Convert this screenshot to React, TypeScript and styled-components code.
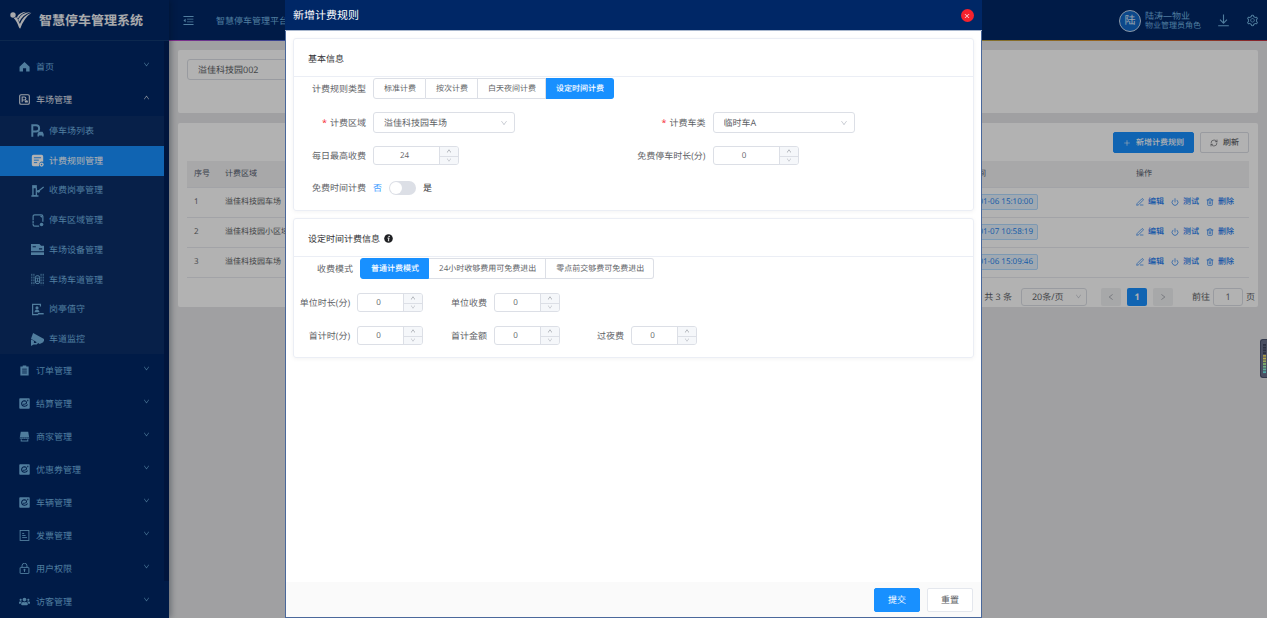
import React, { useState } from "react";
import styled, { createGlobalStyle, css } from "styled-components";
import {
  AiOutlineMenuFold,
  AiOutlineSetting,
  AiOutlineDown,
  AiOutlineUp,
  AiOutlineLeft,
  AiOutlineRight,
  AiOutlineClose,
  AiOutlinePlus,
} from "react-icons/ai";
import { FaUsers } from "react-icons/fa";
import { PenLine, Power, Trash2, RefreshCw } from "lucide-react";

const GlobalStyle = createGlobalStyle`
  * { box-sizing: border-box; }
  body {
    margin: 0;
    background: #e5e6e8;
    color: #606266;
    font-family: "Open Sans", "Noto Sans CJK SC", sans-serif;
    font-size: 9px;
    line-height: 14px;
    text-rendering: geometricPrecision;
    overflow: hidden;
  }
  button, input, select { font: inherit; color: inherit; margin: 0; text-rendering: inherit; }
  button { cursor: pointer; }
  a { color: inherit; text-decoration: none; }
  ul { list-style: none; margin: 0; padding: 0; }
  svg { display: block; flex: none; }
`;

/* ---------- page shell ---------- */

const Shell = styled.div`
  display: flex;
  height: 100vh;
`;

const Sidebar = styled.aside`
  display: flex;
  flex-direction: column;
  flex: none;
  width: 169px;
  background: #002766;
  color: #73b4e2;
  z-index: 1;
  box-shadow: 2px 0 6px rgba(0, 21, 41, 0.35);
`;

const Brand = styled.div`
  display: flex;
  align-items: center;
  gap: 7px;
  height: 41px;
  padding-left: 10px;
  border-bottom: 1px solid #123a70;
  color: #f2f4f7;
  font-size: 13px;
  font-weight: 700;
  line-height: 20px;
  white-space: nowrap;
`;

const MenuScroll = styled.nav`
  flex: 1;
  min-height: 0;
  padding: 9px 5px 0 0;
  background: linear-gradient(#001f58, #001f58) right top / 5px 540px no-repeat;
`;

const MenuLink = styled.a<{ $open?: boolean }>`
  display: flex;
  align-items: center;
  height: 33px;
  padding: 0 14px 0 19px;
  gap: 6px;
  color: ${(p) => (p.$open ? "#e4eaf2" : "inherit")};
`;

const MenuText = styled.span`
  flex: 1;
`;

const MenuArrow = styled.span`
  padding-bottom: 4px;
`;

const SubMenu = styled.ul`
  display: grid;
  grid-template-rows: repeat(8, 1fr);
  height: 238px;
  background: #0b2f69;
`;

const SubLink = styled.a<{ $active?: boolean }>`
  display: flex;
  align-items: center;
  height: 100%;
  padding-left: 31px;
  gap: 5px;
  ${(p) =>
    p.$active &&
    css`
      background: #1890ff;
      color: #ffffff;
    `}
`;

const Main = styled.div`
  flex: 1;
  min-width: 0;
`;

const TopBar = styled.header`
  display: flex;
  align-items: center;
  height: 41px;
  padding: 0 8px 0 13px;
  background:
    linear-gradient(90deg, #c040c8, #3a6ad0 12%, #20b0c0 40%, #b8a040 74%, #d89030 85%, #c03040) left bottom / 100% 1px no-repeat,
    #002766;
  color: #73b4e2;
`;

const Crumb = styled.span`
  flex: 1;
  margin-left: 21px;
`;

const IconButton = styled.button`
  display: flex;
  align-items: center;
  padding: 0;
  border: 0;
  background: none;
`;

const Avatar = styled.span`
  display: grid;
  place-items: center;
  width: 22px;
  height: 22px;
  margin-right: 4px;
  border: 1px solid #c5d8ee;
  border-radius: 50%;
  background: #1268c8;
  color: #dce9f8;
  font-size: 11px;
`;

const User = styled.div`
  display: flex;
  flex-direction: column;
  margin-right: 16px;
  line-height: 11px;
`;

const Role = styled.span`
  font-size: 8px;
  line-height: 10px;
`;

const TopTools = styled.div`
  display: flex;
  gap: 16px;
`;

const Content = styled.main`
  display: flex;
  flex-direction: column;
  gap: 10px;
  padding: 9px;
`;

const Panel = styled.section`
  background: #ffffff;
  border-radius: 2px;
`;

const SearchPanel = styled(Panel)`
  height: 63px;
  padding: 9px;
`;

const SearchInput = styled.input`
  display: block;
  width: 142px;
  height: 21px;
  padding: 0 10px;
  border: 1px solid #dcdfe6;
  border-radius: 3px;
  background: #ffffff;
`;

const Toolbar = styled.div`
  display: flex;
  justify-content: flex-end;
  gap: 6px;
  padding: 9px 9px 8px;
`;

const ToolButton = styled.button<{ $primary?: boolean }>`
  display: flex;
  align-items: center;
  justify-content: center;
  gap: 5px;
  height: 21px;
  padding: 0 9px;
  border: 1px solid ${(p) => (p.$primary ? "#1890ff" : "#dcdfe6")};
  border-radius: 2px;
  background: ${(p) => (p.$primary ? "#1890ff" : "#ffffff")};
  color: ${(p) => (p.$primary ? "#ffffff" : "#606266")};
  font-size: 8px;
  font-weight: 500;
`;

const TableWrap = styled.div`
  padding: 0 9px;
`;

const Table = styled.table`
  width: 100%;
  table-layout: fixed;
  border-collapse: collapse;
  font-size: 8px;

  th, td {
    height: 30px;
    padding: 0 7px;
    border-bottom: 1px solid #e8eaef;
    text-align: left;
    white-space: nowrap;
  }
  th {
    height: 26px;
    background: #f1f1f2;
    color: #515a6e;
    font-weight: 400;
  }
`;

const Tag = styled.span`
  display: inline-block;
  height: 16px;
  width: 84px;
  padding: 0 4px;
  border: 1px solid #b3dcff;
  border-radius: 2px;
  background: #e6f3ff;
  color: #1880f0;
  line-height: 14px;
  text-align: right;
`;

const Actions = styled.div`
  display: flex;
  gap: 7px;
`;

const ActionLink = styled.button`
  display: flex;
  align-items: center;
  gap: 4px;
  padding: 0;
  border: 0;
  background: none;
  color: #1878f0;
  font-weight: 500;
`;

const Pagination = styled.div`
  display: flex;
  align-items: center;
  justify-content: flex-end;
  height: 29px;
  padding: 9px 3px 0 0;
`;

const PageButton = styled.button<{ $current?: boolean }>`
  display: grid;
  place-items: center;
  width: 20px;
  height: 18px;
  margin-right: 6px;
  padding: 0;
  border: 0;
  border-radius: 2px;
  background: ${(p) => (p.$current ? "#1890ff" : "#f0f1f3")};
  color: ${(p) => (p.$current ? "#ffffff" : "#a0a4ac")};
  font-weight: ${(p) => (p.$current ? 700 : 400)};
`;

const PageInput = styled.input`
  width: 30px;
  height: 18px;
  margin: 0 3px;
  padding: 0;
  border: 1px solid #dcdfe6;
  border-radius: 3px;
  text-align: center;
`;

const JumpLabel = styled.label`
  display: flex;
  align-items: center;
  margin-left: 13px;
`;

/* ---------- form controls ---------- */

const SelectBox = styled.div<{ $width: number }>`
  position: relative;
  width: ${(p) => p.$width}px;

  svg {
    position: absolute;
    right: 7px;
    top: 50%;
    margin-top: -4px;
    color: #c0c4cc;
    pointer-events: none;
  }
`;

const SelectField = styled.select<{ $small?: boolean }>`
  display: block;
  appearance: none;
  width: 100%;
  height: ${(p) => (p.$small ? 18 : 21)}px;
  padding: 0 10px;
  border: 1px solid #dcdfe6;
  border-radius: 3px;
  background: #ffffff;
`;

const Stepper = styled.div<{ $wide?: boolean }>`
  display: flex;
  width: ${(p) => (p.$wide ? 86 : 66)}px;
  height: 19px;
  border: 1px solid #dcdfe6;
  border-radius: 3px;
  background: #ffffff;
  overflow: hidden;
`;

const StepperInput = styled.input`
  flex: 1;
  min-width: 0;
  padding: 0 4px 0 0;
  border: 0;
  background: none;
  text-align: center;
  font-size: 8px;
  appearance: textfield;

  &::-webkit-inner-spin-button { appearance: none; margin: 0; }
`;

const StepperButtons = styled.div`
  display: grid;
  grid-template-rows: 1fr 1fr;
  width: 19px;
  border-left: 1px solid #dcdfe6;
  background: #f5f7fa;
`;

const StepperButton = styled.button`
  display: grid;
  place-items: center;
  min-height: 0;
  padding: 0;
  border: 0;
  background: none;
  color: #8f939b;

  & + & { border-top: 1px solid #dcdfe6; color: #b4b8c0; }
`;

const RadioGroup = styled.div`
  display: flex;
`;

const RadioButton = styled.label<{ $checked: boolean }>`
  display: flex;
  align-items: center;
  height: 21px;
  padding: 0 9px 0 10px;
  border: 1px solid ${(p) => (p.$checked ? "#1890ff" : "#dcdfe6")};
  border-left-width: 0;
  background: ${(p) => (p.$checked ? "#1890ff" : "#ffffff")};
  color: ${(p) => (p.$checked ? "#ffffff" : "#606266")};
  font-size: 8px;
  font-weight: ${(p) => (p.$checked ? 500 : 400)};
  white-space: nowrap;
  cursor: pointer;

  &:first-child { border-left-width: 1px; border-radius: 3px 0 0 3px; }
  &:last-child { border-radius: 0 3px 3px 0; }

  input { position: absolute; opacity: 0; width: 0; height: 0; }
`;

const SwitchRow = styled.div`
  display: flex;
  align-items: center;
  gap: 7px;
  height: 20px;
`;

const SwitchText = styled.span<{ $on?: boolean }>`
  color: ${(p) => (p.$on ? "#409eff" : "#303133")};
`;

const SwitchInput = styled.input`
  appearance: none;
  width: 27px;
  height: 14px;
  padding: 1px;
  border-radius: 7px;
  background: #dcdfe6;
  cursor: pointer;

  &::before {
    content: "";
    display: block;
    width: 12px;
    height: 12px;
    border-radius: 50%;
    background: #ffffff;
  }
  &:checked { background: #1890ff; }
  &:checked::before { margin-left: 13px; }
`;

/* ---------- dialog ---------- */

const Mask = styled.div`
  position: fixed;
  inset: 0;
  z-index: 10;
  display: flex;
  justify-content: center;
  background: rgba(0, 0, 0, 0.3);
`;

const Dialog = styled.div`
  display: flex;
  flex-direction: column;
  width: 55%;
  height: 100%;
  border: 1px solid #4a689b;
  border-top: 0;
  background: #ffffff;
`;

const DialogHead = styled.header`
  display: flex;
  align-items: center;
  justify-content: space-between;
  height: 31px;
  padding: 1px 8px 0;
  margin: 0 -1px;
  background: #002766;
  border-bottom: 1px solid #a9b7cd;
`;

const DialogTitle = styled.h2`
  margin: 0;
  color: #ffffff;
  font-size: 11px;
  font-weight: 400;
`;

const CloseButton = styled.button`
  display: grid;
  place-items: center;
  width: 13px;
  height: 13px;
  padding: 0;
  border: 0;
  border-radius: 50%;
  background: #f5222d;
  color: #ffffff;

  svg { stroke: currentColor; stroke-width: 40; }
`;

const DialogBody = styled.div`
  flex: 1;
  display: flex;
  flex-direction: column;
  gap: 7px;
  padding: 7px;
`;

const Card = styled.section`
  border: 1px solid #ebeef5;
  border-radius: 3px;
  box-shadow: 0 1px 4px rgba(0, 0, 0, 0.05);
`;

const CardTitle = styled.h3`
  display: flex;
  align-items: center;
  gap: 4px;
  height: 38px;
  margin: 0;
  padding: 2px 14px 0;
  border-bottom: 1px solid #ebeef5;
  color: #303133;
  font-size: 9px;
  font-weight: 400;
`;

const CardBody = styled.div<{ $loose?: boolean }>`
  display: flex;
  flex-direction: column;
  gap: ${(p) => (p.$loose ? 14 : 13)}px;
  padding: 1px 0 12px;
`;

const HalfGrid = styled.div`
  display: grid;
  grid-template-columns: 1fr 1fr;
`;

const SlotGrid = styled.div`
  display: grid;
  grid-template-columns: repeat(3, 137px);
`;

const Field = styled.div<{ $label: number }>`
  display: grid;
  grid-template-columns: ${(p) => p.$label}px auto;
  justify-content: start;
  align-items: center;
  gap: 7px;
`;

const FieldLabel = styled.label<{ $required?: boolean }>`
  text-align: right;
  white-space: nowrap;

  ${(p) =>
    p.$required &&
    css`
      &::before { content: "*"; margin-right: 3px; color: #f5222d; }
    `}
`;

const DialogFoot = styled.footer`
  display: flex;
  align-items: center;
  justify-content: flex-end;
  gap: 7px;
  height: 35px;
  padding: 0 8px;
  background: #fafafa;
`;

const FootButton = styled.button<{ $primary?: boolean }>`
  width: 46px;
  height: 24px;
  padding: 0;
  border: 1px solid ${(p) => (p.$primary ? "#1890ff" : "#e4e7ed")};
  border-radius: 2px;
  background: ${(p) => (p.$primary ? "#1890ff" : "#ffffff")};
  color: ${(p) => (p.$primary ? "#ffffff" : "#606266")};
`;

const Meter = styled.div`
  position: fixed;
  right: 0;
  top: 339px;
  z-index: 20;
  width: 7px;
  height: 39px;
  padding: 4px 1px 4px 2px;
  border: 1px solid #343a4c;
  border-right: 0;
  border-radius: 3px 0 0 3px;
  background: #4a4f62;
`;

/* ---------- drawings ---------- */

const Logo = () => (
  <svg width="22" height="18" viewBox="0 0 22 18" fill="#f2f4f7">
    <circle cx="3" cy="4" r="2.700" />
    <path d="M3.800 7.200 Q6.600 5.400 7.400 7.400 L9.900 13 Q13 4.600 21.500 1.800 Q14 7 10.300 17.600 Q9.400 17.600 8.800 16 Q6.600 9.600 3.800 7.200Z" />
    <path d="M8.200 8.400 Q11 1.400 20.800 .9 Q12.600 3.600 9.300 11Z" />
    <path d="M6.900 6.200 Q9 1.200 16.400 .7 Q10.400 2.600 7.900 7.800Z" />
  </svg>
);

const DownloadIcon = () => (
  <svg width="13" height="13" viewBox="0 0 13 13" fill="none" stroke="currentColor" strokeWidth="1.100">
    <path d="M6.500 .5v8.500M3 5.600l3.500 3.500L10 5.600M1.200 11.800h10.600" />
  </svg>
);

type GlyphName =
  | "home" | "parking" | "lot" | "rules" | "booth" | "area" | "device" | "lane" | "guard" | "camera"
  | "order" | "settle" | "shop" | "invoice" | "lock";

const glyphs: Record<GlyphName, React.ReactNode> = {
  home: <path d="M8 1.400 15.400 8.400v6.800h-5V10.600H5.800v4.600h-5V8.400z" />,
  parking: (
    <>
      <rect x="1" y="1" width="14" height="14" rx="2" fill="none" stroke="currentColor" strokeWidth="1.600" />
      <path d="M4.600 12V4.400h3.200a2.200 2.200 0 0 1 0 4.400H4.600" fill="none" stroke="currentColor" strokeWidth="1.600" />
      <path d="M8.600 12.400v-1.800l.8-1.400h2.600l.8 1.400v1.800z" />
    </>
  ),
  lot: (
    <>
      <path d="M1.600 15.600V1.600h4.600a3.800 3.800 0 0 1 0 7.600H1.600" fill="none" stroke="currentColor" strokeWidth="2.400" />
      <path d="M8 15.400v-3.200l1.400-2.800h4.800l1.400 2.800v3.200h-1.800v-1.200H9.800v1.200z" />
    </>
  ),
  rules: (
    <>
      <path d="M3 1h10a2 2 0 0 1 2 2v6.600a4 4 0 0 0-5 5.400H3a2 2 0 0 1-2-2V3a2 2 0 0 1 2-2z" />
      <path d="M3.600 4.600h8.800M3.600 7.600h6M3.600 10.600h4" stroke="#1890ff" strokeWidth="1.100" />
      <circle cx="13" cy="13" r="2.600" />
      <circle cx="13" cy="13" r="1" fill="#1890ff" />
    </>
  ),
  booth: (
    <>
      <path d="M1.400 1.400h5.800v3.800H1.400z" />
      <path d="M2.400 5v9.400h4.200V5M.4 14.800h8.800M6.600 9.800 9.400 8.600l6.200-5" fill="none" stroke="currentColor" strokeWidth="1.700" />
      <circle cx="9.200" cy="9" r="1.700" />
    </>
  ),
  area: (
    <>
      <path d="M10 15H4.600a2 2 0 0 1-2-2V3a2 2 0 0 1 2-2h8a2 2 0 0 1 2 2v6.400" fill="none" stroke="currentColor" strokeWidth="1.500" />
      <path d="M2.600 7.400v1M2.600 11v.8" stroke="#0b2f69" strokeWidth="2" />
      <path d="M10.600 2h3v3z" />
      <circle cx="13" cy="13" r="2.200" />
    </>
  ),
  device: (
    <>
      <path d="M0 1.200h10.400l2 2.200H16v6.800H0z" />
      <path d="M0 11.400h16v3.400H0z" />
      <path d="M2 4.600h4M9.800 7.200h4" stroke="#0b2f69" strokeWidth="1.400" />
    </>
  ),
  lane: (
    <>
      <path d="M1 1v14M3.600 1v14M12.400 1v14M15 1v14" stroke="currentColor" strokeWidth="1.100" strokeDasharray="2.400 1" />
      <rect x="5.400" y="3.400" width="5.200" height="9.600" rx="2" fill="none" stroke="currentColor" strokeWidth="1.200" />
      <path d="M5.400 6.400h5.200M5.400 10.200h5.200M8 6.400v3.800" stroke="currentColor" strokeWidth="1" />
    </>
  ),
  guard: (
    <>
      <path d="M11.600 4.400V1.600H2v12.800h7" fill="none" stroke="currentColor" strokeWidth="1.500" />
      <circle cx="7.400" cy="6" r="1.900" />
      <path d="M4.200 11.400q.4-3 3.200-3t3.200 3z" />
      <path d="M8.400 13.200h7.200" stroke="currentColor" strokeWidth="1.800" />
    </>
  ),
  camera: (
    <>
      <path d="M2.600 0 16 7.400v1.800l-1 2.200-4.200 2L0 7z" />
      <path d="M0 8l3.600 1.600v2.600H6l1.600-1.400 1.800 1-2.400 2.400H3.200L0 16z" />
    </>
  ),
  order: (
    <>
      <path d="M5.400.6h5.200v1.600H14v13.200H2V2.200h3.400z" />
      <path d="M4.600 6h6.800M4.600 8.800h6.800M4.600 11.600h6.800" stroke="#002766" strokeWidth="1.200" />
    </>
  ),
  settle: (
    <>
      <rect x=".4" y=".4" width="15.200" height="15.200" rx="1.200" />
      <path d="M6 9q5 .2 5-2.400Q10.600 4 8 4q-4 .2-4.200 4 .4 4 4.200 4 3 0 4.400-2.600M12.800 4.600V2.600" fill="none" stroke="#002766" strokeWidth="1.500" />
    </>
  ),
  shop: (
    <>
      <path d="M2.600 1.200h10.800l1.400 8.400H1.200z" />
      <path d="M1.200 9.400a1.800 1.800 0 0 0 3.400 0 1.800 1.800 0 0 0 3.400 0 1.800 1.800 0 0 0 3.400 0 1.800 1.800 0 0 0 3.400 0v2H1.200z" />
      <path d="M3.200 12v2.600h9.600V12" fill="none" stroke="currentColor" strokeWidth="1.500" />
    </>
  ),
  invoice: (
    <>
      <rect x="1.600" y=".8" width="12.800" height="14.400" fill="none" stroke="currentColor" strokeWidth="1.300" />
      <path d="M4.600 5h3M4.600 8h5M4.600 11h7" stroke="currentColor" strokeWidth="1.300" />
    </>
  ),
  lock: (
    <>
      <rect x="1.600" y="6.400" width="12.800" height="9" rx=".8" fill="none" stroke="currentColor" strokeWidth="1.400" />
      <path d="M4.400 6.400V4a3.600 3.600 0 0 1 7.200 0v2.400M8 9v4" fill="none" stroke="currentColor" strokeWidth="1.400" />
      <circle cx="8" cy="9.800" r="1.400" />
    </>
  ),
};

const Glyph = ({ name, size = 11 }: { name: GlyphName; size?: number }) => (
  <svg width={size} height={size} viewBox="0 0 16 16" fill="currentColor">
    {glyphs[name]}
  </svg>
);

const InfoIcon = () => (
  <svg width="9" height="9" viewBox="0 0 18 18">
    <circle cx="9" cy="9" r="8.600" fill="#1f2023" />
    <circle cx="10.200" cy="4.800" r="1.500" fill="#fff" />
    <path d="M7 8.200h3L8.600 13.600h1.800" fill="none" stroke="#fff" strokeWidth="1.900" />
  </svg>
);

/* ---------- components ---------- */

interface MenuEntry { text: string; icon: React.ReactNode }

const subItems: { text: string; icon: GlyphName }[] = [
  { text: "停车场列表", icon: "lot" },
  { text: "计费规则管理", icon: "rules" },
  { text: "收费岗亭管理", icon: "booth" },
  { text: "停车区域管理", icon: "area" },
  { text: "车场设备管理", icon: "device" },
  { text: "车场车道管理", icon: "lane" },
  { text: "岗亭值守", icon: "guard" },
  { text: "车道监控", icon: "camera" },
];

const lowerItems: MenuEntry[] = [
  { text: "订单管理", icon: <Glyph name="order" /> },
  { text: "结算管理", icon: <Glyph name="settle" /> },
  { text: "商家管理", icon: <Glyph name="shop" /> },
  { text: "优惠券管理", icon: <Glyph name="settle" /> },
  { text: "车辆管理", icon: <Glyph name="settle" /> },
  { text: "发票管理", icon: <Glyph name="invoice" /> },
  { text: "用户权限", icon: <Glyph name="lock" /> },
  { text: "访客管理", icon: <FaUsers size={11} /> },
];

const MenuItem = ({ text, icon, open }: MenuEntry & { open?: boolean }) => (
  <MenuLink href="#" $open={open}>
    {icon}
    <MenuText>{text}</MenuText>
    <MenuArrow>{open ? <AiOutlineUp size={7} /> : <AiOutlineDown size={7} />}</MenuArrow>
  </MenuLink>
);

const rows = [
  { area: "溢佳科技园车场", time: "01-06 15:10:00" },
  { area: "溢佳科技园小区域", time: "01-07 10:58:19" },
  { area: "溢佳科技园车场", time: "01-06 15:09:46" },
];

const NumberField = ({ id, label, value, labelWidth, wide }: {
  id: string; label: string; value: number; labelWidth: number; wide?: boolean;
}) => {
  const [n, setN] = useState(value);
  return (
    <Field $label={labelWidth}>
      <FieldLabel htmlFor={id}>{label}</FieldLabel>
      <Stepper $wide={wide}>
        <StepperInput id={id} type="number" value={n} onChange={(e) => setN(Number(e.target.value))} />
        <StepperButtons>
          <StepperButton type="button" aria-label="增加" onClick={() => setN(n + 1)}><AiOutlineUp size={6} /></StepperButton>
          <StepperButton type="button" aria-label="减少" onClick={() => setN(Math.max(0, n - 1))}><AiOutlineDown size={6} /></StepperButton>
        </StepperButtons>
      </Stepper>
    </Field>
  );
};

const SelectInput = ({ id, label, option }: { id: string; label: string; option: string }) => (
  <Field $label={72}>
    <FieldLabel htmlFor={id} $required>{label}</FieldLabel>
    <SelectBox $width={142}>
      <SelectField id={id}><option>{option}</option></SelectField>
      <AiOutlineDown size={8} />
    </SelectBox>
  </Field>
);

const RadioField = ({ name, label, options, initial, labelWidth }: {
  name: string; label: string; options: string[]; initial: string; labelWidth: number;
}) => {
  const [value, setValue] = useState(initial);
  return (
    <Field $label={labelWidth}>
      <FieldLabel as="span" id={name}>{label}</FieldLabel>
      <RadioGroup role="radiogroup" aria-labelledby={name}>
        {options.map((o) => (
          <RadioButton key={o} $checked={o === value}>
            <input type="radio" name={name} checked={o === value} onChange={() => setValue(o)} />
            {o}
          </RadioButton>
        ))}
      </RadioGroup>
    </Field>
  );
};

const RuleDialog = () => {
  const [free, setFree] = useState(false);
  return (
    <Mask>
      <Dialog role="dialog" aria-labelledby="dialog-title">
        <DialogHead>
          <DialogTitle id="dialog-title">新增计费规则</DialogTitle>
          <CloseButton aria-label="关闭"><AiOutlineClose size={6} /></CloseButton>
        </DialogHead>
        <DialogBody>
          <Card>
            <CardTitle>基本信息</CardTitle>
            <CardBody>
              <RadioField name="rule-type" label="计费规则类型" labelWidth={72} initial="设定时间计费"
                options={["标准计费", "按次计费", "白天夜间计费", "设定时间计费"]} />
              <HalfGrid>
                <SelectInput id="area" label="计费区域" option="溢佳科技园车场" />
                <SelectInput id="car" label="计费车类" option="临时车A" />
              </HalfGrid>
              <HalfGrid>
                <NumberField id="max" label="每日最高收费" value={24} labelWidth={72} wide />
                <NumberField id="free-minutes" label="免费停车时长(分)" value={0} labelWidth={72} wide />
              </HalfGrid>
              <Field $label={72}>
                <FieldLabel htmlFor="free">免费时间计费</FieldLabel>
                <SwitchRow>
                  <SwitchText $on={!free}>否</SwitchText>
                  <SwitchInput id="free" type="checkbox" role="switch" checked={free} onChange={(e) => setFree(e.target.checked)} />
                  <SwitchText $on={free}>是</SwitchText>
                </SwitchRow>
              </Field>
            </CardBody>
          </Card>
          <Card>
            <CardTitle>设定时间计费信息<InfoIcon /></CardTitle>
            <CardBody $loose>
              <RadioField name="mode" label="收费模式" labelWidth={59} initial="普通计费模式"
                options={["普通计费模式", "24小时收够费用可免费进出", "零点前交够费可免费进出"]} />
              <SlotGrid>
                <NumberField id="unit-time" label="单位时长(分)" value={0} labelWidth={56} />
                <NumberField id="unit-fee" label="单位收费" value={0} labelWidth={56} />
              </SlotGrid>
              <SlotGrid>
                <NumberField id="first-time" label="首计时(分)" value={0} labelWidth={56} />
                <NumberField id="first-fee" label="首计金额" value={0} labelWidth={56} />
                <NumberField id="night-fee" label="过夜费" value={0} labelWidth={56} />
              </SlotGrid>
            </CardBody>
          </Card>
        </DialogBody>
        <DialogFoot>
          <FootButton $primary>提交</FootButton>
          <FootButton>重置</FootButton>
        </DialogFoot>
      </Dialog>
    </Mask>
  );
};

const meterColors = ["#2c3142", "#2c3142", "#2c3142", "#2c3142", "#a89a48", "#b5a94c", "#9aa85a", "#7fae6c", "#6fb083", "#5fae96", "#52aaa6"];

const LevelMeter = () => (
  <Meter>
    <svg width="3" height="30" viewBox="0 0 3 33" preserveAspectRatio="none">
      {meterColors.map((c, i) => <rect key={i} x="0" y={i * 3} width="3" height="2" fill={c} />)}
    </svg>
  </Meter>
);

const PageSizeBox = styled(SelectBox)`
  margin: 0 14px 0 9px;
  svg { right: 5px; }
`;

const PageSizeSelect = () => (
  <PageSizeBox $width={66}>
    <SelectField $small aria-label="每页条数"><option>20条/页</option></SelectField>
    <AiOutlineDown size={7} />
  </PageSizeBox>
);

export default function App() {
  return (
    <>
      <GlobalStyle />
      <Shell>
        <Sidebar>
          <Brand><Logo />智慧停车管理系统</Brand>
          <MenuScroll>
            <MenuItem text="首页" icon={<Glyph name="home" />} />
            <MenuItem text="车场管理" icon={<Glyph name="parking" />} open />
            <SubMenu>
              {subItems.map((s) => (
                <li key={s.text}>
                  <SubLink href="#" $active={s.icon === "rules"}><Glyph name={s.icon} size={13} />{s.text}</SubLink>
                </li>
              ))}
            </SubMenu>
            {lowerItems.map((m) => <MenuItem key={m.text} {...m} />)}
          </MenuScroll>
        </Sidebar>
        <Main>
          <TopBar>
            <IconButton aria-label="收起菜单"><AiOutlineMenuFold size={13} /></IconButton>
            <Crumb>智慧停车管理平台</Crumb>
            <Avatar>陆</Avatar>
            <User><span>陆涛—物业</span><Role>物业管理员角色</Role></User>
            <TopTools>
              <IconButton aria-label="下载"><DownloadIcon /></IconButton>
              <IconButton aria-label="设置"><AiOutlineSetting size={13} /></IconButton>
            </TopTools>
          </TopBar>
          <Content>
            <SearchPanel>
              <SearchInput aria-label="停车场" defaultValue="溢佳科技园002" />
            </SearchPanel>
            <Panel>
              <Toolbar>
                <ToolButton $primary><AiOutlinePlus size={8} />新增计费规则</ToolButton>
                <ToolButton><RefreshCw size={8} />刷新</ToolButton>
              </Toolbar>
              <TableWrap>
                <Table>
                  <colgroup>
                    <col width="31" /><col /><col width="182" /><col width="120" />
                  </colgroup>
                  <thead>
                    <tr><th>序号</th><th>计费区域</th><th>更新时间</th><th>操作</th></tr>
                  </thead>
                  <tbody>
                    {rows.map((r, i) => (
                      <tr key={i}>
                        <td>{i + 1}</td>
                        <td>{r.area}</td>
                        <td><Tag>{r.time}</Tag></td>
                        <td>
                          <Actions>
                            <ActionLink><PenLine size={8} />编辑</ActionLink>
                            <ActionLink><Power size={8} />测试</ActionLink>
                            <ActionLink><Trash2 size={8} />删除</ActionLink>
                          </Actions>
                        </td>
                      </tr>
                    ))}
                  </tbody>
                </Table>
              </TableWrap>
              <Pagination>
                <span>共 3 条</span>
                <PageSizeSelect />
                <PageButton aria-label="上一页"><AiOutlineLeft size={8} /></PageButton>
                <PageButton $current>1</PageButton>
                <PageButton aria-label="下一页"><AiOutlineRight size={8} /></PageButton>
                <JumpLabel>前往<PageInput defaultValue="1" />页</JumpLabel>
              </Pagination>
            </Panel>
          </Content>
        </Main>
      </Shell>
      <RuleDialog />
      <LevelMeter />
    </>
  );
}
